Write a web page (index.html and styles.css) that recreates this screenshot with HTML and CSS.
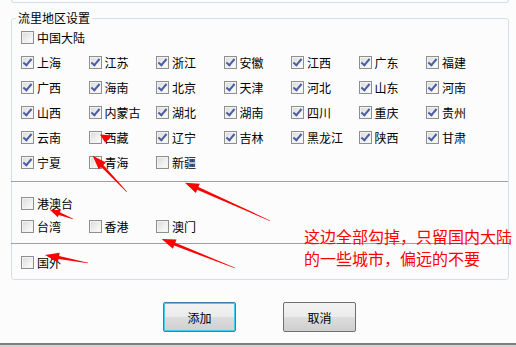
FILE: index.html
```html
<!DOCTYPE html>
<html lang="zh-CN">
<head>
    <meta charset="UTF-8">
    <title>流量地区设置</title>
    <link rel="stylesheet" href="styles.css">
</head>
<body>
    <div class="prev-group"></div>

    <fieldset class="region">
        <legend>流里地区设置</legend>
        <div class="row">
            <label class="opt"><span class="box"></span>中国大陆</label>
        </div>
        <div class="row">
            <label class="opt"><span class="box on"></span>上海</label>
            <label class="opt"><span class="box on"></span>江苏</label>
            <label class="opt"><span class="box on"></span>浙江</label>
            <label class="opt"><span class="box on"></span>安徽</label>
            <label class="opt"><span class="box on"></span>江西</label>
            <label class="opt"><span class="box on"></span>广东</label>
            <label class="opt"><span class="box on"></span>福建</label>
        </div>
        <div class="row">
            <label class="opt"><span class="box on"></span>广西</label>
            <label class="opt"><span class="box on"></span>海南</label>
            <label class="opt"><span class="box on"></span>北京</label>
            <label class="opt"><span class="box on"></span>天津</label>
            <label class="opt"><span class="box on"></span>河北</label>
            <label class="opt"><span class="box on"></span>山东</label>
            <label class="opt"><span class="box on"></span>河南</label>
        </div>
        <div class="row">
            <label class="opt"><span class="box on"></span>山西</label>
            <label class="opt"><span class="box on"></span>内蒙古</label>
            <label class="opt"><span class="box on"></span>湖北</label>
            <label class="opt"><span class="box on"></span>湖南</label>
            <label class="opt"><span class="box on"></span>四川</label>
            <label class="opt"><span class="box on"></span>重庆</label>
            <label class="opt"><span class="box on"></span>贵州</label>
        </div>
        <div class="row">
            <label class="opt"><span class="box on"></span>云南</label>
            <label class="opt"><span class="box"></span>西藏</label>
            <label class="opt"><span class="box on"></span>辽宁</label>
            <label class="opt"><span class="box on"></span>吉林</label>
            <label class="opt"><span class="box on"></span>黑龙江</label>
            <label class="opt"><span class="box on"></span>陕西</label>
            <label class="opt"><span class="box on"></span>甘肃</label>
        </div>
        <div class="row">
            <label class="opt"><span class="box on"></span>宁夏</label>
            <label class="opt"><span class="box"></span>青海</label>
            <label class="opt"><span class="box"></span>新疆</label>
        </div>

        <div class="sep sep-first"></div>

        <div class="row row-tight row-hmt">
            <label class="opt"><span class="box"></span>港澳台</label>
        </div>
        <div class="row row-tight">
            <label class="opt"><span class="box"></span>台湾</label>
            <label class="opt"><span class="box"></span>香港</label>
            <label class="opt"><span class="box"></span>澳门</label>
        </div>

        <div class="sep sep-second"></div>

        <div class="row row-abroad">
            <label class="opt"><span class="box"></span>国外</label>
        </div>
    </fieldset>

    <div class="actions">
        <button class="btn btn-default">添加</button>
        <button class="btn">取消</button>
    </div>

    <div class="footer"></div>

    <!-- annotation drawn over the dialog -->
    <p class="note">这边全部勾掉，只留国内大陆<br>的一些城市，偏远的不要</p>

    <svg class="arrows" width="516" height="347" viewBox="0 0 516 347">
        <polygon points="100,134.5 112.5,135.5 105,142.5"/>
        <polygon points="126.9,191.5 103.4,164.9 105.9,162.5 92.7,155.7 98.7,169.3 101.2,166.9 126.5,191.9"/>
        <polygon points="270.1,220.4 198.4,187 199.8,183.8 185,182.7 195.8,193 197.2,189.8 269.9,221"/>
        <polygon points="73.1,218.7 59.9,212.2 60.8,209.9 50,210 57.8,217.3 58.8,215 72.9,219.3"/>
        <polygon points="235.1,267.7 175.3,242.8 176.5,239.5 161.7,239 172.9,248.8 174.2,245.6 234.9,268.3"/>
        <polygon points="88.05,262.7 59.1,256.1 59.7,252.7 45,255 57.9,262.5 58.5,259.1 87.95,263.3"/>
    </svg>
</body>
</html>
```

FILE: styles.css
```css
body {
    margin: 0;
    width: 516px;
    height: 347px;
    position: relative;
    overflow: hidden;
    background: #fcfcfc;
    font-family: "Noto Sans CJK SC", "Liberation Sans", sans-serif;
    font-size: 12px;
    color: #000;
}
.prev-group {
    height: 2px;
    margin: 0 7px 0 11px;
    border: 1px solid #d5dfe5;
    border-top: none;
    border-radius: 0 0 3px 3px;
}
.region {
    margin: 9px 7px 0 11px;
    padding: 1px 0 4px 0;
    border: 1px solid #d5dfe5;
    border-radius: 3px;
    min-width: 0;
}
.region legend {
    margin-left: 4px;
    padding: 0 2px;
    line-height: 12px;
    height: 12px;
}
.row {
    display: grid;
    grid-template-columns: repeat(7, 67.5px);
    align-items: center;
    height: 25px;
    padding-left: 9px;
}
.row-tight {
    height: 23px;
}
.row-hmt {
    margin-top: 10px;
}
.row-abroad {
    margin-top: 6px;
}
.opt {
    display: flex;
    align-items: center;
    white-space: nowrap;
    line-height: 13px;
}
.box {
    position: relative;
    box-sizing: border-box;
    width: 13px;
    height: 13px;
    margin-right: 3px;
    border: 1px solid #8e8f8f;
    background: linear-gradient(135deg, #d9d9d6 0%, #efefed 55%, #ffffff 100%);
    box-shadow: inset 0 0 0 1px #f2f2f2;
}
.box.on::after {
    content: "";
    position: absolute;
    left: 3px;
    top: 0px;
    width: 3px;
    height: 7px;
    border-right: 2px solid #4a5ea6;
    border-bottom: 2px solid #4a5ea6;
    transform: rotate(40deg);
}
.sep {
    height: 1px;
    background: #a0a0a0;
    margin-left: -1px;
}
.sep-first {
    margin-top: 6px;
}
.sep-second {
    margin-top: 5px;
}
.actions {
    display: flex;
    justify-content: center;
    gap: 47px;
    padding-left: 3px;
    margin-top: 22px;
}
.btn {
    width: 73px;
    height: 30px;
    padding: 0;
    font-family: "Noto Sans CJK SC", "Liberation Sans", sans-serif;
    font-size: 12px;
    color: #000;
    border: 1px solid #707070;
    border-radius: 2px;
    background: linear-gradient(#f2f2f2 0%, #ebebeb 50%, #dddddd 50%, #cfcfcf 100%);
}
.btn-default {
    border-color: #3c7fb1;
    box-shadow: inset 0 0 0 1px #48c6f4;
}
.footer {
    margin-top: 11px;
    height: 2px;
    border-top: 2px solid #7d7d7d;
    background: #d4d4d4;
}
.note {
    position: absolute;
    left: 304px;
    top: 225px;
    margin: 0;
    font-size: 16px;
    line-height: 22px;
    color: #ff0000;
    white-space: nowrap;
}
.arrows {
    position: absolute;
    left: 0;
    top: 0;
    pointer-events: none;
}
.arrows polygon {
    fill: #ff0000;
}
```
